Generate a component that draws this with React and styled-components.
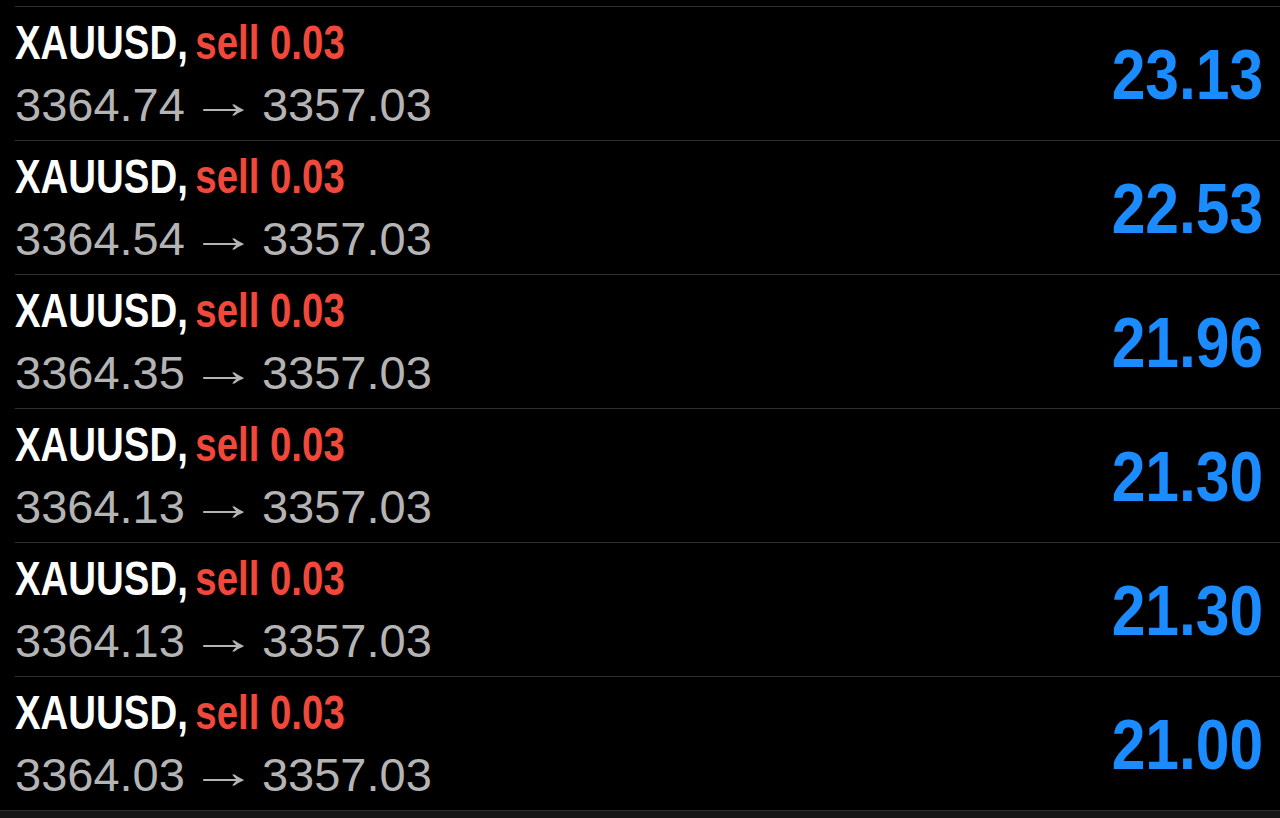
import React from "react";
import styled, { createGlobalStyle } from "styled-components";

const GlobalStyle = createGlobalStyle`
  html, body {
    margin: 0;
    padding: 0;
    background: #000;
  }
  body {
    font-family: "Liberation Sans", Arial, sans-serif;
    -webkit-font-smoothing: antialiased;
  }
`;

const Screen = styled.div`
  width: 1280px;
  height: 818px;
  overflow: hidden;
  background: #000;
  display: flex;
  flex-direction: column;
  padding-top: 6px;
  box-sizing: border-box;
`;

const List = styled.div`
  display: flex;
  flex-direction: column;
`;

const Row = styled.div`
  height: 134px;
  box-sizing: border-box;
  margin-left: 15px;
  border-top: 1px solid #2f2f2f;
  display: flex;
  align-items: center;
  justify-content: space-between;
  padding-right: 17px;
`;

const Info = styled.div`
  display: flex;
  flex-direction: column;
  padding-top: 1px;
`;

const Title = styled.div`
  font-family: "Liberation Sans", Arial, sans-serif;
  font-weight: 700;
  font-size: 48px;
  line-height: 62px;
  color: #ffffff;
  white-space: nowrap;
`;

/* Condensed face: no condensed family is installed, so narrow the bold face */
const Condensed = styled.span`
  display: inline-block;
  transform: scaleX(${(p) => p.$scale});
  transform-origin: ${(p) => p.$origin} center;
`;

const Side = styled.span`
  color: ${(p) => p.$color};
  margin-left: -4px;
`;

const Prices = styled.div`
  font-family: "Liberation Sans", Arial, sans-serif;
  font-weight: 400;
  font-size: 47px;
  line-height: 62px;
  color: #b4b4b4;
  white-space: nowrap;
  display: flex;
  align-items: baseline;
`;

const Arrow = styled.span`
  display: inline-block;
  width: 46px;
  margin: 0 27px 0 4px;
  transform: translateY(-3px) scaleX(1.45);
  transform-origin: left center;
`;

const Profit = styled.div`
  font-family: "Liberation Sans", Arial, sans-serif;
  font-weight: 700;
  font-size: 70px;
  line-height: 80px;
  color: ${(p) => p.$color};
  white-space: nowrap;
  margin-top: 2px;
`;

const Footer = styled.div`
  flex: 1;
  border-top: 1px solid #2f2f2f;
  background: #161616;
`;

const trades = [
  { open: "3364.74", close: "3357.03", profit: "23.13" },
  { open: "3364.54", close: "3357.03", profit: "22.53" },
  { open: "3364.35", close: "3357.03", profit: "21.96" },
  { open: "3364.13", close: "3357.03", profit: "21.30" },
  { open: "3364.13", close: "3357.03", profit: "21.30" },
  { open: "3364.03", close: "3357.03", profit: "21.00" },
];

export default function App() {
  return (
    <>
      <GlobalStyle />
      <Screen>
        <List>
          {trades.map((t, i) => (
            <Row key={i}>
              <Info>
                <Title>
                  <Condensed $scale={0.8} $origin="left">
                    XAUUSD, <Side $color="#f0483a">sell 0.03</Side>
                  </Condensed>
                </Title>
                <Prices>
                  <span>{t.open}</span>
                  <Arrow>→</Arrow>
                  <span>{t.close}</span>
                </Prices>
              </Info>
              <Profit $color="#1a8cff">
                <Condensed $scale={0.865} $origin="right">
                  {t.profit}
                </Condensed>
              </Profit>
            </Row>
          ))}
        </List>
        <Footer />
      </Screen>
    </>
  );
}
